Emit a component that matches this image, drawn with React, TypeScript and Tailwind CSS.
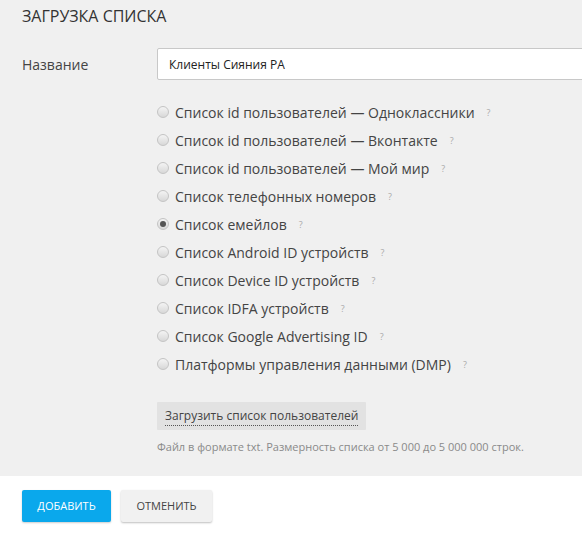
import { useState } from "react";

const options = [
  "Список id пользователей — Одноклассники",
  "Список id пользователей — Вконтакте",
  "Список id пользователей — Мой мир",
  "Список телефонных номеров",
  "Список емейлов",
  "Список Android ID устройств",
  "Список Device ID устройств",
  "Список IDFA устройств",
  "Список Google Advertising ID",
  "Платформы управления данными (DMP)",
];

export default function App() {
  const [selected, setSelected] = useState(4);
  const [name, setName] = useState("Клиенты Сияния РА");

  return (
    <div className="w-[582px] h-[534px] overflow-hidden bg-white font-['Open_Sans',sans-serif] text-[#333]">
      {/* Form panel */}
      <div className="bg-[#f0f0f0] h-[476px] pt-[4px]">
        <h2 className="px-[22px] text-[16px] leading-[24px] uppercase text-[#333]">Загрузка списка</h2>

        <div className="mt-[20px] flex items-center">
          <label className="w-[157px] shrink-0 pl-[22px] text-[14px] text-[#444]">Название</label>
          <input
            value={name}
            onChange={(e) => setName(e.target.value)}
            className="h-[32px] w-[440px] shrink-0 rounded-[2px] border border-[#c8c8c8] bg-white px-[11px] text-[12px] text-[#222] outline-none"
          />
        </div>

        <div className="mt-[18px] pl-[157px]">
          {options.map((label, i) => (
            <label key={label} className="flex h-[28px] cursor-pointer items-center">
              <span
                onClick={() => setSelected(i)}
                className="relative flex h-[12px] w-[12px] shrink-0 items-center justify-center rounded-full border border-[#c4c4c4] bg-gradient-to-b from-[#f4f4f4] to-[#d8d8d8]"
              >
                {selected === i && <span className="h-[6px] w-[6px] rounded-full bg-[#555]" />}
              </span>
              <span onClick={() => setSelected(i)} className="ml-[6px] text-[14px] text-[#444]">
                {label}
              </span>
              <span className="ml-[12px] mt-[2px] text-[9px] text-[#aaa]">?</span>
            </label>
          ))}
        </div>

        <div className="mt-[24px] pl-[157px]">
          <button className="h-[28px] rounded-[1px] bg-[#e2e2e2] px-[8px] text-[12px] text-[#444]">
            <span className="border-b border-dotted border-[#555] pb-[1px]">Загрузить список пользователей</span>
          </button>
          <p className="mt-[9px] text-[11px] text-[#8a8a8a]">
            Файл в формате txt. Размерность списка от 5 000 до 5 000 000 строк.
          </p>
        </div>
      </div>

      {/* Actions */}
      <div className="flex gap-[10px] pl-[22px] pt-[14px]">
        <button className="h-[32px] w-[89px] rounded-[2px] bg-[#0aa8ec] text-[11px] uppercase text-white shadow-[0_1px_2px_rgba(0,0,0,0.2)]">
          Добавить
        </button>
        <button className="h-[32px] w-[91px] rounded-[2px] bg-[#f1f1f1] text-[11px] uppercase text-[#444] shadow-[0_1px_2px_rgba(0,0,0,0.25)]">
          Отменить
        </button>
      </div>
    </div>
  );
}
